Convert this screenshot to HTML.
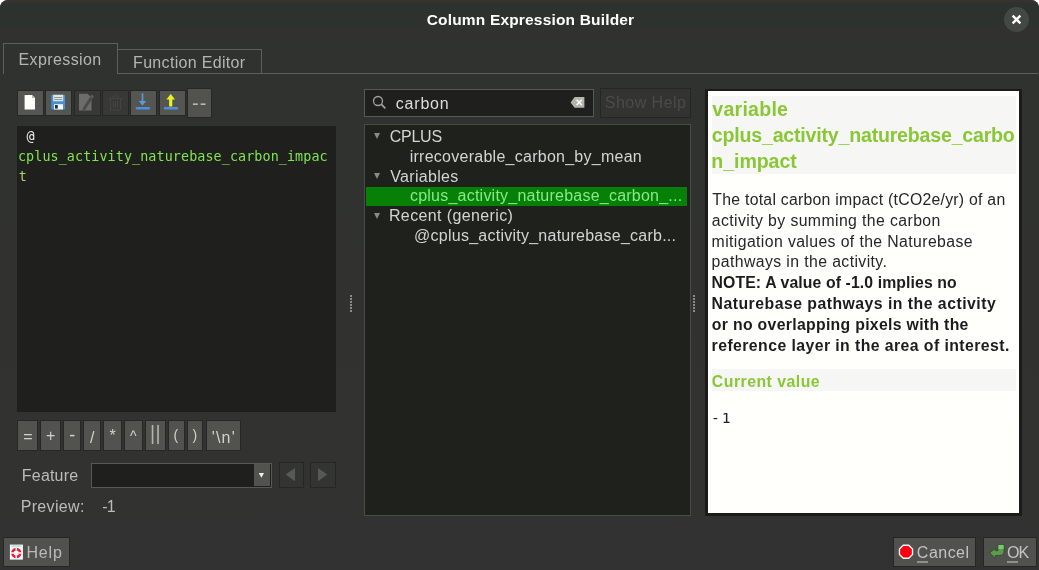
<!DOCTYPE html>
<html lang="en">
<head>
<meta charset="utf-8">
<title>Column Expression Builder</title>
<style>
*{box-sizing:border-box;margin:0;padding:0}
html,body{width:1039px;height:570px;overflow:hidden;background:#fff}
body{font-family:"Liberation Sans",sans-serif;color:#b9b9b5;font-size:16px;position:relative}
.win{position:absolute;left:0;top:0;width:1039px;height:570px;background:linear-gradient(#30322f 0,#30322f 120px,#323231 420px,#323232 570px);border-radius:8px 8px 0 0;overflow:hidden;will-change:transform}
.abs,.win div,.win svg{position:absolute}
.tx{position:absolute;white-space:pre;display:block}
.titlebar{left:0;top:0;width:1039px;height:38px;background:linear-gradient(#36352f 0,#30332e 2px,#2d322e 5px,#2d322e 24px,#31322f 31px)}
.close{left:1004px;top:7px;width:25px;height:25px;border-radius:50%;background:#444843}
.line{background:#5a605c}
.tbtn{width:27px;height:26px;top:90px;background:#555652;border:1px solid #272826}
.tbtn.dis{background:#383937}
.editor{left:17px;top:126px;width:319px;height:285.5px;background:#1f201d}
.obtn{top:420px;height:31px;background:#52534f;border:1px solid #272826}
.btn{background:#515250;border:1px solid #262725}
.field{background:#1f201d;border:1px solid #565954}
.tree{left:364px;top:124px;width:327px;height:392px;background:#1f211d;border:1px solid #494b47}
.sel{left:365.7px;top:186.6px;width:321.8px;height:19.7px;background:#078007}
.arrow{width:0;height:0;border-left:3.3px solid transparent;border-right:3.3px solid transparent;border-top:6px solid #8b8b86}
.help{left:705px;top:89px;width:317px;height:427px;background:#1b1c1a}
.helpin{left:3px;top:2px;width:311px;height:422px;background:#fffffc}
.hbg{background:#f6f6f4}
.dot{width:2px;height:2px;background:#8c8c89}
#t_title{left:426.75px;top:8px;font:bold 15.5px/24px 'Liberation Sans',sans-serif;color:#ffffff;letter-spacing:0.17px}
#t_tab1{left:18.50px;top:48px;font:normal 16px/24px 'Liberation Sans',sans-serif;color:#b6b6b1;letter-spacing:0.39px}
#t_tab2{left:133.05px;top:51px;font:normal 16px/24px 'Liberation Sans',sans-serif;color:#b6b6b1;letter-spacing:0.32px}
#t_search{left:395.85px;top:92px;font:normal 16px/24px 'Liberation Sans',sans-serif;color:#dededa;letter-spacing:0.78px}
#t_showhelp{left:604.85px;top:91px;font:normal 16px/24px 'Liberation Sans',sans-serif;color:#4b4b48;letter-spacing:0.46px}
#t_r0{left:389.65px;top:125px;font:normal 16px/24px 'Liberation Sans',sans-serif;color:#d4d4d0;letter-spacing:-0.22px}
#t_r1{left:409.70px;top:145px;font:normal 16px/24px 'Liberation Sans',sans-serif;color:#d4d4d0;letter-spacing:0.26px}
#t_r2{left:390.20px;top:165px;font:normal 16px/24px 'Liberation Sans',sans-serif;color:#d4d4d0;letter-spacing:0.33px}
#t_r3{left:409.95px;top:184px;font:normal 16px/24px 'Liberation Sans',sans-serif;color:#86ea86;letter-spacing:0.23px}
#t_r4{left:388.95px;top:204px;font:normal 16px/24px 'Liberation Sans',sans-serif;color:#d4d4d0;letter-spacing:0.38px}
#t_r5{left:414.05px;top:224px;font:normal 16px/24px 'Liberation Sans',sans-serif;color:#d4d4d0;letter-spacing:0.25px}
#t_feature{left:21.85px;top:464px;font:normal 16px/24px 'Liberation Sans',sans-serif;color:#bcbcb7;letter-spacing:0.19px}
#t_preview{left:20.65px;top:495px;font:normal 16px/24px 'Liberation Sans',sans-serif;color:#bcbcb7;letter-spacing:0.35px}
#t_pval{left:102.35px;top:495px;font:normal 16px/24px 'Liberation Sans',sans-serif;color:#bcbcb7;letter-spacing:-0.80px}
#t_help{left:26.45px;top:541px;font:normal 16px/24px 'Liberation Sans',sans-serif;color:#bcbcb7;letter-spacing:0.83px}
#t_cancel{left:916.85px;top:541px;font:normal 16px/24px 'Liberation Sans',sans-serif;color:#c4c4bf;letter-spacing:0.48px}
#t_ok{left:1006.95px;top:541px;font:normal 16px/24px 'Liberation Sans',sans-serif;color:#c4c4bf;letter-spacing:-0.80px}
#t_h1{left:712.35px;top:97px;font:bold 19.6px/24px 'Liberation Sans',sans-serif;color:#8ac736;letter-spacing:0.22px}
#t_h2{left:711.85px;top:123px;font:bold 19.6px/24px 'Liberation Sans',sans-serif;color:#8ac736;letter-spacing:-0.21px}
#t_h3{left:711.35px;top:149px;font:bold 19.6px/24px 'Liberation Sans',sans-serif;color:#8ac736;letter-spacing:-0.09px}
#t_p1{left:712.35px;top:188px;font:normal 15.8px/24px 'Liberation Sans',sans-serif;color:#262626;letter-spacing:0.26px}
#t_p2{left:711.85px;top:209px;font:normal 15.8px/24px 'Liberation Sans',sans-serif;color:#262626;letter-spacing:0.40px}
#t_p3{left:711.60px;top:230px;font:normal 15.8px/24px 'Liberation Sans',sans-serif;color:#262626;letter-spacing:0.39px}
#t_p4{left:711.60px;top:250px;font:normal 15.8px/24px 'Liberation Sans',sans-serif;color:#262626;letter-spacing:0.40px}
#t_b1{left:711.60px;top:271px;font:bold 15.8px/24px 'Liberation Sans',sans-serif;color:#1c1c1c;letter-spacing:0.10px}
#t_b2{left:711.60px;top:292px;font:bold 15.8px/24px 'Liberation Sans',sans-serif;color:#1c1c1c;letter-spacing:0.48px}
#t_b3{left:711.85px;top:313px;font:bold 15.8px/24px 'Liberation Sans',sans-serif;color:#1c1c1c;letter-spacing:0.31px}
#t_b4{left:711.60px;top:334px;font:bold 15.8px/24px 'Liberation Sans',sans-serif;color:#1c1c1c;letter-spacing:0.43px}
#t_cur{left:711.85px;top:370px;font:bold 15.8px/24px 'Liberation Sans',sans-serif;color:#8ac736;letter-spacing:0.49px}
#t_curv{left:710.90px;top:406px;font:normal 14.67px/24px 'DejaVu Sans Mono','Liberation Mono',monospace;color:#202020;letter-spacing:2.00px}
#t_e1{left:26.55px;top:125px;font:normal 13.4px/24px 'DejaVu Sans Mono','Liberation Mono',monospace;color:#f2f2f2}
#t_e2{left:17.95px;top:145px;font:normal 13.4px/24px 'DejaVu Sans Mono','Liberation Mono',monospace;color:#80e550;letter-spacing:0.09px}
#t_e3{left:18.85px;top:165px;font:normal 13.4px/24px 'DejaVu Sans Mono','Liberation Mono',monospace;color:#a9d66a}
#t_dash{left:192.00px;top:91px;font:normal 20px/24px 'Liberation Sans',sans-serif;color:#b9b9b2;letter-spacing:1.10px}
#t_o0{left:23.20px;top:425px;font:normal 16px/24px 'Liberation Sans',sans-serif;color:#d2d2cc}
#t_o1{left:45.88px;top:424px;font:normal 16px/24px 'Liberation Sans',sans-serif;color:#d2d2cc}
#t_o2{left:69.20px;top:423px;font:normal 18px/24px 'Liberation Sans',sans-serif;color:#d2d2cc}
#t_o3{left:89.95px;top:426px;font:normal 16px/24px 'Liberation Sans',sans-serif;color:#d2d2cc}
#t_o4{left:109.38px;top:424px;font:normal 16px/24px 'Liberation Sans',sans-serif;color:#d2d2cc}
#t_o5{left:129.88px;top:424px;font:normal 14px/24px 'Liberation Sans',sans-serif;color:#d2d2cc}
#t_o6{left:150.05px;top:421px;font:normal 19.5px/24px 'Liberation Sans',sans-serif;color:#b4b4ae;letter-spacing:0.45px}
#t_o7{left:173.40px;top:423px;font:normal 14px/24px 'Liberation Sans',sans-serif;color:#d2d2cc}
#t_o8{left:192.60px;top:423px;font:normal 14px/24px 'Liberation Sans',sans-serif;color:#d2d2cc}
#t_o9{left:211.75px;top:426px;font:normal 16px/24px 'Liberation Sans',sans-serif;color:#d2d2cc;letter-spacing:1.17px}
</style>
</head>
<body>
<div class="win">
  <div class="titlebar"></div>
  <span class="tx" id="t_title">Column Expression Builder</span>
  <div class="close">
    <svg width="25" height="25" viewBox="0 0 25 25" style="left:0;top:0"><path d="M8.6 8.6 L16.4 16.4 M16.4 8.6 L8.6 16.4" stroke="#fff" stroke-width="2.3" fill="none"/></svg>
  </div>

  <!-- tab bar -->
  <div class="line" style="left:117px;top:73px;width:921px;height:1px"></div>
  <div class="line" style="left:3px;top:43px;width:115px;height:1px"></div>
  <div class="line" style="left:3px;top:43px;width:1px;height:31px"></div>
  <div class="line" style="left:117px;top:43px;width:1px;height:31px"></div>
  <div class="line" style="left:118px;top:49px;width:144px;height:1px"></div>
  <div class="line" style="left:261px;top:49px;width:1px;height:25px"></div>
  <span class="tx" id="t_tab1">Expression</span>
  <span class="tx" id="t_tab2">Function Editor</span>

  <!-- toolbar -->
  <div class="tbtn" style="left:17px"></div>
  <div class="tbtn" style="left:45px"></div>
  <div class="tbtn dis" style="left:74px"></div>
  <div class="tbtn dis" style="left:102px"></div>
  <div class="tbtn" style="left:130px"></div>
  <div class="tbtn" style="left:159px"></div>
  <div class="tbtn" style="left:187px;top:88px;height:30px;width:25px;background:#52534f"></div>
  <svg width="200" height="32" viewBox="0 0 200 32" style="left:17px;top:87px">
    <!-- new file -->
    <path d="M7.6 8 H15 L18 11 V22.5 H7.6 Z" fill="#fffffa"/>
    <path d="M15 8 V11 H18 Z" fill="#b9b9b2"/>
    <!-- save (floppy) -->
    <rect x="34.3" y="7.8" width="13.8" height="14.7" rx="1" fill="#4b8fd6"/>
    <rect x="36.2" y="7.8" width="10" height="6.4" fill="#dfe6e6"/>
    <rect x="37.2" y="10" width="8" height="1" fill="#8f9696"/>
    <rect x="37.2" y="12" width="8" height="1" fill="#8f9696"/>
    <rect x="37" y="17.2" width="9" height="5.3" fill="#f4f7f7"/>
    <rect x="38" y="18" width="2.8" height="3.6" fill="#22303c"/>
    <!-- edit (disabled) -->
    <path d="M62 6.8 H70.5 L74.5 10.5 V23.6 H62 Z" fill="#6c6c69"/>
    <path d="M74.6 7.4 L77 9.2 L68.4 22.4 L65.6 23.6 L66 20.8 Z" fill="#4b4b49"/>
    <path d="M74.6 7.4 L77 9.2 L75.4 11.6 L73 9.8 Z" fill="#5c5c5a"/>
    <!-- trash (disabled) -->
    <g stroke="#434441" stroke-width="1" fill="none">
      <path d="M91.5 11.5 H105.5"/>
      <path d="M96 11.5 V9 H101 V11.5"/>
      <path d="M93.5 11.5 V23 H103.5 V11.5"/>
      <path d="M96.5 14 V20.5 M98.5 14 V20.5 M100.5 14 V20.5"/>
    </g>
    <!-- import (down arrow) -->
    <path d="M125.5 6.2 V17.5" stroke="#5a9adb" stroke-width="1.6" fill="none"/>
    <path d="M121.8 14 L125.5 18.6 L129.2 14 Z" fill="#5a9adb"/>
    <rect x="118.6" y="20" width="14.4" height="2.4" rx="1" fill="#4d8fd8"/>
    <!-- export (up arrow) -->
    <path d="M153.7 19.5 V10" stroke="#e9f323" stroke-width="3.2" fill="none"/>
    <path d="M149.4 12.4 L153.7 7 L158 12.4 Z" fill="#e9f323"/>
    <rect x="146.8" y="20" width="14.4" height="2.4" rx="1" fill="#4d8fd8"/>
  </svg>
  <span class="tx" id="t_dash">--</span>

  <!-- editor -->
  <div class="editor"></div>
  <span class="tx" id="t_e1">@</span>
  <span class="tx" id="t_e2">cplus_activity_naturebase_carbon_impac</span>
  <span class="tx" id="t_e3">t</span>

  <!-- operator buttons -->
  <div class="obtn" style="left:17px;width:21px"></div>
  <div class="obtn" style="left:40px;width:21px"></div>
  <div class="obtn" style="left:63px;width:18px"></div>
  <div class="obtn" style="left:83px;width:18px"></div>
  <div class="obtn" style="left:103px;width:19px"></div>
  <div class="obtn" style="left:124px;width:19px"></div>
  <div class="obtn" style="left:145px;width:21px"></div>
  <div class="obtn" style="left:168px;width:17px"></div>
  <div class="obtn" style="left:187px;width:16px"></div>
  <div class="obtn" style="left:206px;width:35px"></div>
  <span class="tx" id="t_o0">=</span>
  <span class="tx" id="t_o1">+</span>
  <span class="tx" id="t_o2">-</span>
  <span class="tx" id="t_o3">/</span>
  <span class="tx" id="t_o4">*</span>
  <span class="tx" id="t_o5">^</span>
  <span class="tx" id="t_o6">||</span>
  <span class="tx" id="t_o7">(</span>
  <span class="tx" id="t_o8">)</span>
  <span class="tx" id="t_o9">'\n'</span>

  <!-- feature row -->
  <span class="tx" id="t_feature">Feature</span>
  <div class="field" style="left:90.5px;top:462.5px;width:181px;height:25.5px"></div>
  <div style="left:254px;top:464px;width:16px;height:22px;background:#52534f"></div>
  <svg width="10" height="10" viewBox="0 0 10 10" style="left:256px;top:470px"><path d="M2.8 3 H8 L5.4 7.7 Z" fill="#f2f2ec"/></svg>
  <div style="left:278.5px;top:462px;width:25.5px;height:25.5px;background:#343432;border:1px solid #262725"></div>
  <div style="left:309.7px;top:462px;width:26.3px;height:25.5px;background:#343432;border:1px solid #262725"></div>
  <svg width="60" height="26" viewBox="0 0 60 26" style="left:278px;top:462px">
    <path d="M17 6 V19.3 L7.6 12.6 Z" fill="#555a57"/>
    <path d="M40 6 V19.3 L49.3 12.6 Z" fill="#555a57"/>
  </svg>
  <span class="tx" id="t_preview">Preview:</span>
  <span class="tx" id="t_pval">-1</span>

  <!-- splitter handles -->
  <div class="dot" style="left:350px;top:295px"></div><div class="dot" style="left:350px;top:298px"></div><div class="dot" style="left:350px;top:301px"></div><div class="dot" style="left:350px;top:304px"></div><div class="dot" style="left:350px;top:307px"></div><div class="dot" style="left:350px;top:310px"></div>
  <div class="dot" style="left:693px;top:295px"></div><div class="dot" style="left:693px;top:298px"></div><div class="dot" style="left:693px;top:301px"></div><div class="dot" style="left:693px;top:304px"></div><div class="dot" style="left:693px;top:307px"></div><div class="dot" style="left:693px;top:310px"></div>

  <!-- search -->
  <div class="field" style="left:363.5px;top:89px;width:230.5px;height:27.7px"></div>
  <svg width="16" height="16" viewBox="0 0 16 16" style="left:371px;top:95px"><circle cx="7" cy="6" r="4.5" stroke="#a3a39e" stroke-width="1.3" fill="none"/><path d="M10.2 9.2 L14.3 13.3" stroke="#a3a39e" stroke-width="1.7" fill="none"/></svg>
  <span class="tx" id="t_search">carbon</span>
  <svg width="16" height="13" viewBox="0 0 16 13" style="left:570px;top:96px"><path d="M0.6 6.4 L4.6 1 H14.4 V11.8 H4.6 Z" fill="#b4b4ad"/><path d="M6.6 3.8 L11.8 9 M11.8 3.8 L6.6 9" stroke="#fff" stroke-width="1.4" fill="none"/></svg>
  <div class="btn" style="left:600px;top:88px;width:91px;height:30px;background:#333432"></div>
  <span class="tx" id="t_showhelp">Show Help</span>

  <!-- tree -->
  <div class="tree"></div>
  <div class="sel"></div>
  <div class="arrow" style="left:373.6px;top:133px"></div>
  <div class="arrow" style="left:373.6px;top:172.8px"></div>
  <div class="arrow" style="left:373.6px;top:212.5px"></div>
  <span class="tx" id="t_r0">CPLUS</span>
  <span class="tx" id="t_r1">irrecoverable_carbon_by_mean</span>
  <span class="tx" id="t_r2">Variables</span>
  <span class="tx" id="t_r3">cplus_activity_naturebase_carbon_...</span>
  <span class="tx" id="t_r4">Recent (generic)</span>
  <span class="tx" id="t_r5">@cplus_activity_naturebase_carb...</span>

  <!-- help panel -->
  <div class="help"><div class="helpin">
    <div class="hbg" style="left:4px;top:5px;width:304px;height:78px"></div>
    <div class="hbg" style="left:4px;top:278px;width:304px;height:22px"></div>
  </div></div>
  <span class="tx" id="t_h1">variable</span>
  <span class="tx" id="t_h2">cplus_activity_naturebase_carbo</span>
  <span class="tx" id="t_h3">n_impact</span>
  <span class="tx" id="t_p1">The total carbon impact (tCO2e/yr) of an</span>
  <span class="tx" id="t_p2">activity by summing the carbon</span>
  <span class="tx" id="t_p3">mitigation values of the Naturebase</span>
  <span class="tx" id="t_p4">pathways in the activity.</span>
  <span class="tx" id="t_b1">NOTE: A value of -1.0 implies no</span>
  <span class="tx" id="t_b2">Naturebase pathways in the activity</span>
  <span class="tx" id="t_b3">or no overlapping pixels with the</span>
  <span class="tx" id="t_b4">reference layer in the area of interest.</span>
  <span class="tx" id="t_cur">Current value</span>
  <span class="tx" id="t_curv">-1</span>

  <!-- bottom buttons -->
  <div class="btn" style="left:3px;top:537px;width:66.5px;height:30.3px"></div>
  <svg width="16" height="18" viewBox="0 0 16 18" style="left:9px;top:543px">
    <rect x="0.9" y="1.6" width="13" height="15" fill="#fbfdfb"/>
    <rect x="2.4" y="2.6" width="10" height="0.9" fill="#7fc4b0"/>
    <circle cx="7.3" cy="10" r="3.9" stroke="#ee1c3c" stroke-width="2.6" fill="none"/>
    <path d="M7.3 4.6 V7.6 M7.3 12.4 V15.4 M1.9 10 H4.9 M9.7 10 H12.7" stroke="#fff" stroke-width="1.5"/>
  </svg>
  <span class="tx" id="t_help">Help</span>

  <div class="btn" style="left:893px;top:537px;width:83.4px;height:30.3px"></div>
  <svg width="18" height="18" viewBox="0 0 18 18" style="left:897px;top:543px">
    <path d="M6.29 2.2 H11.71 L15.55 6.04 V11.46 L11.71 15.3 H6.29 L2.45 11.46 V6.04 Z" fill="#f80012" stroke="#f4f6f0" stroke-width="1.4"/>
  </svg>
  <span class="tx" id="t_cancel">Cancel</span>
  <div class="line" style="left:917px;top:561px;width:11px;height:2px;background:#8e8e8a"></div>

  <div class="btn" style="left:983px;top:537px;width:54.2px;height:30.3px"></div>
  <svg width="18" height="18" viewBox="0 0 18 18" style="left:988px;top:542px">
    <path d="M10 2.5 H16 V9 Q16 13.5 11 13.5 H7.4 V16.2 L1.7 11 L7.4 6.3 V8.6 H10 Z" fill="#5c9a4c" stroke="#2c4a2a" stroke-width="0.8"/>
    <path d="M10.4 2.9 H15.6 V7 H10.4 Z" fill="#80c470"/>
  </svg>
  <span class="tx" id="t_ok">OK</span>
  <div class="line" style="left:1007px;top:561px;width:11px;height:2px;background:#8e8e8a"></div>
</div>
</body>
</html>
